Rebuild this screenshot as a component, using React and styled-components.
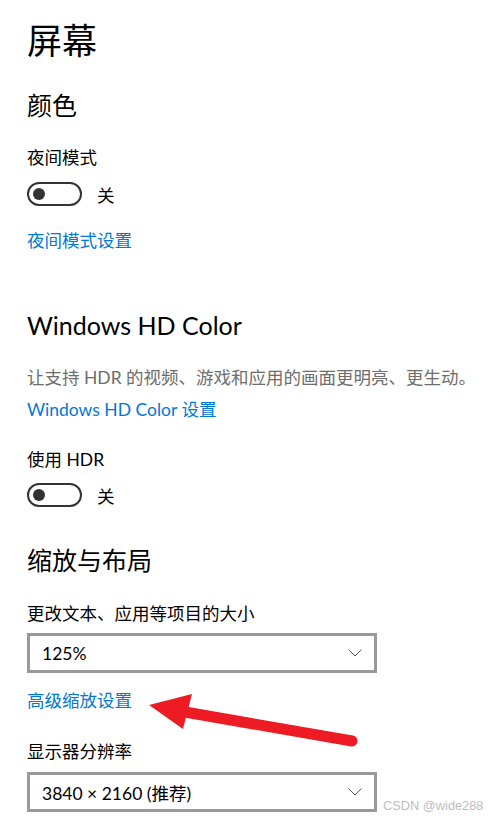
import React from 'react'
import styled, { createGlobalStyle } from 'styled-components'

const GlobalStyle = createGlobalStyle`
  html, body {
    margin: 0;
    padding: 0;
    background: #fff;
  }
  body {
    font-family: "Segoe UI", Lato, "Noto Sans CJK SC", sans-serif;
    color: #000;
  }
`

const Page = styled.main`
  position: relative;
  width: 497px;
  height: 822px;
  padding: 16px 0 0 27px;
  box-sizing: border-box;
  overflow: hidden;
`

const PageTitle = styled.h1`
  margin: 0;
  font-size: 35px;
  font-weight: 400;
  line-height: 48px;
`

const Heading = styled.h2`
  margin: ${p => p.$gap}px 0 0;
  font-size: 25px;
  font-weight: 400;
  line-height: 34px;
`

const Label = styled.div`
  margin-top: ${p => p.$gap}px;
  font-size: 17.5px;
  line-height: 24px;
  color: ${p => (p.$muted ? '#6d6d6d' : '#000')};
`

const Link = styled.a`
  display: block;
  margin-top: ${p => p.$gap}px;
  font-size: 17.5px;
  line-height: 24px;
  color: #0078d7;
  text-decoration: none;
  cursor: pointer;
`

const ToggleRow = styled.div`
  display: flex;
  align-items: center;
  gap: 15px;
  margin-top: ${p => p.$gap}px;
  height: 24px;
  font-size: 17.5px;
`

const Switch = styled.span`
  position: relative;
  width: 55px;
  height: 24px;
  box-sizing: border-box;
  border: 2.5px solid #333;
  border-radius: 12px;

  &::after {
    content: '';
    position: absolute;
    left: 4px;
    top: 3.5px;
    width: 12px;
    height: 12px;
    border-radius: 50%;
    background: #333;
  }
`

const Select = styled.div`
  display: flex;
  align-items: center;
  justify-content: space-between;
  margin-top: ${p => p.$gap}px;
  width: 350px;
  height: 40px;
  box-sizing: border-box;
  border: 3px solid #999;
  padding: 0 12px 0 12px;
  font-size: 17.5px;
  color: #000;
`

const Chevron = () => (
  <svg width="14" height="8" viewBox="0 0 14 8">
    <polyline points="0.5,0.5 7,7 13.5,0.5" fill="none" stroke="#555" strokeWidth="1" />
  </svg>
)

const Arrow = styled.svg`
  position: absolute;
  left: 0;
  top: 0;
  pointer-events: none;
`

const Watermark = styled.span`
  position: absolute;
  left: 383px;
  top: 798px;
  font-family: "Liberation Sans", Arial, sans-serif;
  font-size: 12.8px;
  color: #bdbdbd;
`

const Toggle = ({ gap }) => (
  <ToggleRow $gap={gap}>
    <Switch />
    <span>关</span>
  </ToggleRow>
)

export default function App() {
  return (
    <>
      <GlobalStyle />
      <Page>
        <PageTitle>屏幕</PageTitle>

        <Heading $gap={24}>颜色</Heading>
        <Label $gap={24}>夜间模式</Label>
        <Toggle gap={12} />
        <Link $gap={23}>夜间模式设置</Link>

        <Heading $gap={55}>Windows HD Color</Heading>
        <Label $gap={24} $muted>让支持 HDR 的视频、游戏和应用的画面更明亮、更生动。</Label>
        <Link $gap={8}>Windows HD Color 设置</Link>
        <Label $gap={26}>使用 HDR</Label>
        <Toggle gap={11} />

        <Heading $gap={36}>缩放与布局</Heading>
        <Label $gap={25}>更改文本、应用等项目的大小</Label>
        <Select $gap={7}>
          <span>125%</span>
          <Chevron />
        </Select>
        <Link $gap={16}>高级缩放设置</Link>
        <Label $gap={27}>显示器分辨率</Label>
        <Select $gap={8}>
          <span>3840 × 2160 (推荐)</span>
          <Chevron />
        </Select>

        <Arrow width="497" height="822" viewBox="0 0 497 822">
          <line x1="185" y1="712" x2="352" y2="741" stroke="#ed1c24" strokeWidth="11" strokeLinecap="round" />
          <polygon points="149,705 192,694 183,729" fill="#ed1c24" />
        </Arrow>
        <Watermark>CSDN @wide288</Watermark>
      </Page>
    </>
  )
}
